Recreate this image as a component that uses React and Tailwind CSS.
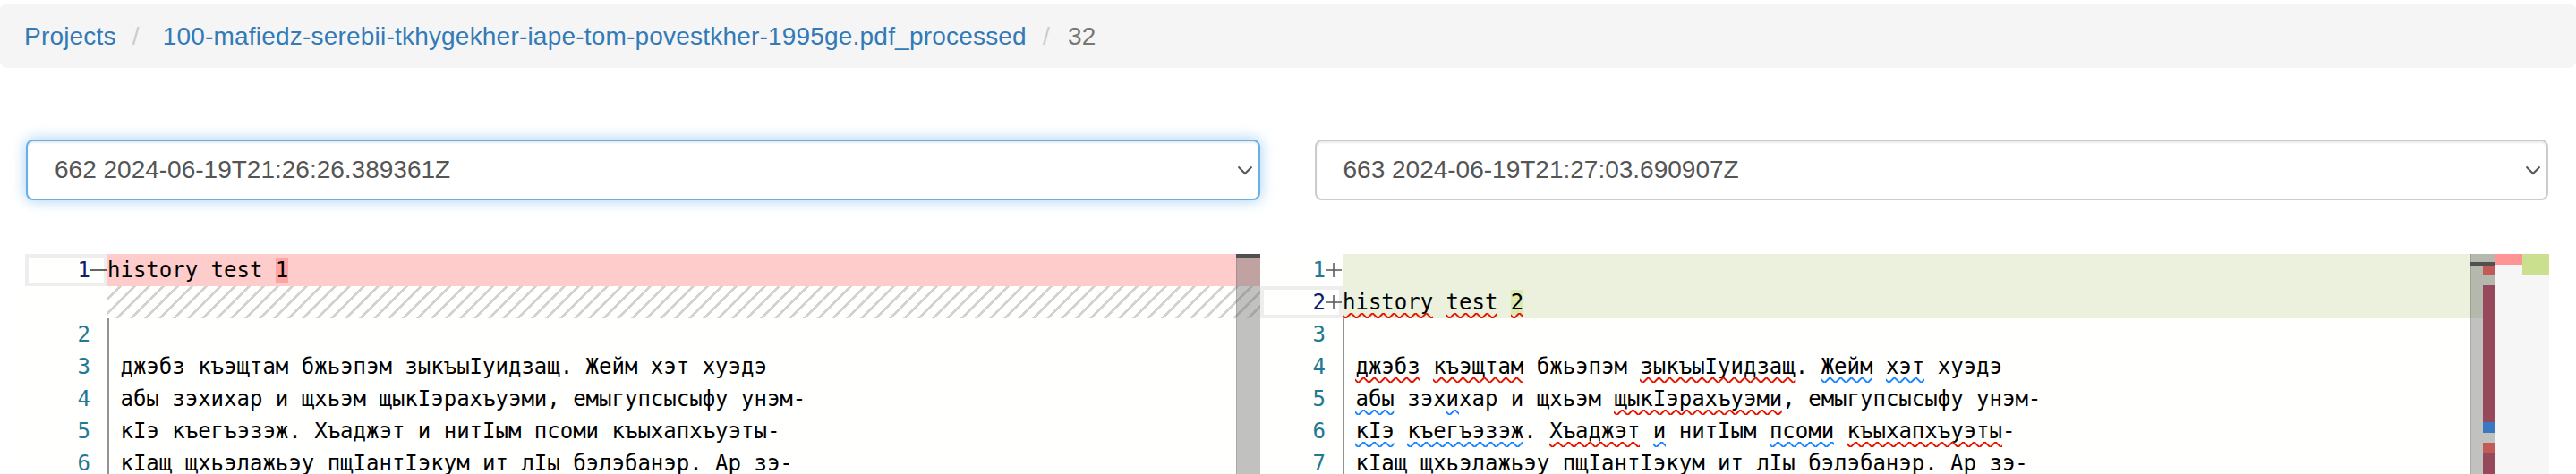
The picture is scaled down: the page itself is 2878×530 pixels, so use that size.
import React from "react";

const MONO = "font-['DejaVu_Sans_Mono',monospace]";

function Chevron() {
  return (
    <svg width="18" height="11" viewBox="0 0 18 11" fill="none">
      <path d="M1.5 1.5 L9 9 L16.5 1.5" stroke="#555" strokeWidth="2" />
    </svg>
  );
}

function Select({ value, focused }) {
  return (
    <div
      className={`flex h-[68px] items-center justify-between rounded-[8px] border-2 bg-white pl-[30px] pr-[6px] text-[28px] text-[#555] ${
        focused
          ? "border-[#66afe9] shadow-[inset_0_2px_2px_rgba(0,0,0,0.075),0_0_16px_rgba(102,175,233,0.6)]"
          : "border-[#ccc] shadow-[inset_0_2px_2px_rgba(0,0,0,0.075)]"
      }`}
    >
      <span>{value}</span>
      <Chevron />
    </div>
  );
}

// squiggly underline, red = error, blue = info
function Sq({ c, children }) {
  return (
    <span className="relative inline-block">
      {children}
      <svg className="pointer-events-none absolute bottom-0 left-0 h-[6px] w-full">
        <rect width="100%" height="6" fill={c === "r" ? "url(#sq-red)" : "url(#sq-blue)"} />
      </svg>
    </span>
  );
}

function Sign({ type }) {
  return (
    <svg className="absolute right-0 top-[8px] h-[20px] w-[20px]" viewBox="0 0 20 20">
      {type === "minus" ? (
        <path d="M1 10 H19" stroke="#333" strokeWidth="1.5" />
      ) : (
        <path d="M1 10 H19 M10 2 V18" stroke="#555" strokeWidth="1.5" />
      )}
    </svg>
  );
}

function Gutter({ n, active, sign }) {
  return (
    <div className="relative w-[92px] shrink-0">
      {active && <div className="absolute inset-0 border-4 border-[#eeeeee]" />}
      <div className={`relative pr-[19px] text-right ${active ? "text-[#0b216f]" : "text-[#237893]"}`}>
        {n ?? "\u00a0"}
      </div>
      {sign && <Sign type={sign} />}
    </div>
  );
}

function Row({ n, active, sign, bg = "", guide, children }) {
  return (
    <div className="flex h-[36px]">
      <Gutter n={n} active={active} sign={sign} />
      <div className={`relative flex-1 whitespace-pre text-black ${bg}`}>
        {guide && <span className="absolute left-0 top-0 h-full w-[2px] bg-[#939393]" />}
        {children}
      </div>
    </div>
  );
}

const HATCH =
  "bg-[linear-gradient(-45deg,rgba(34,34,34,0.2)_12.5%,transparent_12.5%,transparent_50%,rgba(34,34,34,0.2)_50%,rgba(34,34,34,0.2)_62.5%,transparent_62.5%,transparent_100%)] bg-size-[16px_16px]";

const lines = [
  " джэбз къэщтам бжьэпэм зыкъыIуидзащ. Жейм хэт хуэдэ",
  " абы зэхихар и щхьэм щыкIэрахъуэми, емыгупсысыфу унэм-",
  " кIэ къегъэзэж. Хъаджэт и нитIым псоми къыхапхъуэты-",
  " кIащ щхьэлажьэу пщIантIэкум ит лIы бэлэбанэр. Ар зэ-",
  " гуэрым еплъу щытащ.",
];

export default function App() {
  return (
    <div className="flex h-screen flex-col overflow-hidden bg-white font-['Liberation_Sans',Arial,sans-serif]">
      <svg className="absolute h-0 w-0">
        <defs>
          <pattern id="sq-red" width="12" height="6" patternUnits="userSpaceOnUse">
            <g fill="#e51400">
              <polygon points="11,0 5,6 2.2,6 8.2,0" />
              <polygon points="8,0 12,4 12,1.2 10.8,0" />
              <polygon points="0,4 2,6 4.8,6 0,1.2" />
            </g>
          </pattern>
          <pattern id="sq-blue" width="12" height="6" patternUnits="userSpaceOnUse">
            <g fill="#1a85ff">
              <polygon points="11,0 5,6 2.2,6 8.2,0" />
              <polygon points="8,0 12,4 12,1.2 10.8,0" />
              <polygon points="0,4 2,6 4.8,6 0,1.2" />
            </g>
          </pattern>
        </defs>
      </svg>

      <nav className="mt-[4px] flex h-[72px] shrink-0 rounded-[8px] bg-[#f5f5f5] pl-[27px] pt-[17px] text-[28px] leading-[40px] tracking-[0.2px]">
        <a className="text-[#337ab7]">Projects</a>
        <span className="ml-[18px] mr-[26px] text-[#ccc]">/</span>
        <a className="text-[#337ab7]">100-mafiedz-serebii-tkhygekher-iape-tom-povestkher-1995ge.pdf_processed</a>
        <span className="ml-[18px] mr-[20px] text-[#ccc]">/</span>
        <span className="text-[#777]">32</span>
      </nav>

      <div className="mt-[80px] grid shrink-0 grid-cols-2 gap-[61px] pl-[29px] pr-[31px]">
        <Select value="662 2024-06-19T21:26:26.389361Z" focused />
        <Select value="663 2024-06-19T21:27:03.690907Z" />
      </div>

      <div className={`ml-[28px] mt-[60px] flex w-[2820px] flex-1 bg-[#fffffe] text-[24px] leading-[36px] ${MONO}`}>
        {/* original side */}
        <div className="relative w-[1380px] shrink-0 overflow-hidden">
          <Row n={1} active sign="minus" bg="bg-[#ffcccc]">
            history test <span className="bg-[#ffa3a3]">1</span>
          </Row>
          <Row bg={HATCH} />
          <Row n={2} guide />
          {lines.map((t, i) => (
            <Row key={i} n={i + 3} guide>
              {t}
            </Row>
          ))}
          <div className="absolute bottom-0 right-0 top-0 w-[27px] bg-[rgba(100,100,100,0.4)] shadow-[inset_1px_0_0_rgba(0,0,0,0.12)]">
            <div className="h-[4px] w-full bg-[#505050]" />
          </div>
        </div>

        {/* modified side */}
        <div className="relative flex-1 overflow-hidden">
          <Row n={1} sign="plus" bg="bg-[#ebf1dc]" />
          <Row n={2} active sign="plus" bg="bg-[#ebf1dc]">
            <Sq c="r">history</Sq> <Sq c="r">test</Sq>{" "}
            <Sq c="r">
              <span className="bg-[#dbeab0]">2</span>
            </Sq>
          </Row>
          <Row n={3} guide />
          <Row n={4} guide>
            {" "}
            <Sq c="r">джэбз</Sq> <Sq c="r">къэщтам</Sq>
            {" бжьэпэм "}
            <Sq c="r">зыкъыIуидзащ</Sq>
            {". "}
            <Sq c="b">Жейм</Sq> <Sq c="b">хэт</Sq>
            {" хуэдэ"}
          </Row>
          <Row n={5} guide>
            {" "}
            <Sq c="b">абы</Sq>
            {" зэх"}
            <Sq c="b">и</Sq>
            {"хар и щхьэм "}
            <Sq c="r">щыкIэрахъуэми</Sq>
            {", емыгупсысыфу унэм-"}
          </Row>
          <Row n={6} guide>
            {" "}
            <Sq c="b">кIэ</Sq> <Sq c="b">къегъэзэж</Sq>
            {". "}
            <Sq c="r">Хъаджэт</Sq> <Sq c="b">и</Sq>
            {" нитIым "}
            <Sq c="b">псоми</Sq> <Sq c="r">къыхапхъуэты</Sq>-
          </Row>
          <Row n={7} guide>
            {lines[3]}
          </Row>
          <Row n={8} guide>
            {lines[4]}
          </Row>
          <div className="absolute bottom-0 right-0 top-0 w-[28px] bg-[rgba(100,100,100,0.4)] shadow-[inset_1px_0_0_rgba(0,0,0,0.12)]">
            <div className="absolute right-0 top-[13px] h-[10px] w-[14px] bg-[#c25b58]" />
            <div className="absolute right-0 top-[35px] h-[153px] w-[14px] bg-[#96495b]" />
            <div className="absolute right-0 top-[188px] h-[12px] w-[14px] bg-[#3a78c2]" />
            <div className="absolute right-0 top-[211px] h-[12px] w-[14px] bg-[#c25b58]" />
            <div className="absolute right-0 top-[223px] h-[60px] w-[14px] bg-[#96495b]" />
            <div className="absolute left-0 top-[9px] h-[4px] w-full bg-[#505050]" />
          </div>
        </div>

        {/* diff overview ruler */}
        <div className="flex w-[60px] shrink-0 items-start bg-[#f6f6f6]">
          <div className="h-[12px] w-[30px] bg-[#ff9494]" />
          <div className="h-[24px] w-[30px] bg-[#cbe08f]" />
        </div>
      </div>
    </div>
  );
}
